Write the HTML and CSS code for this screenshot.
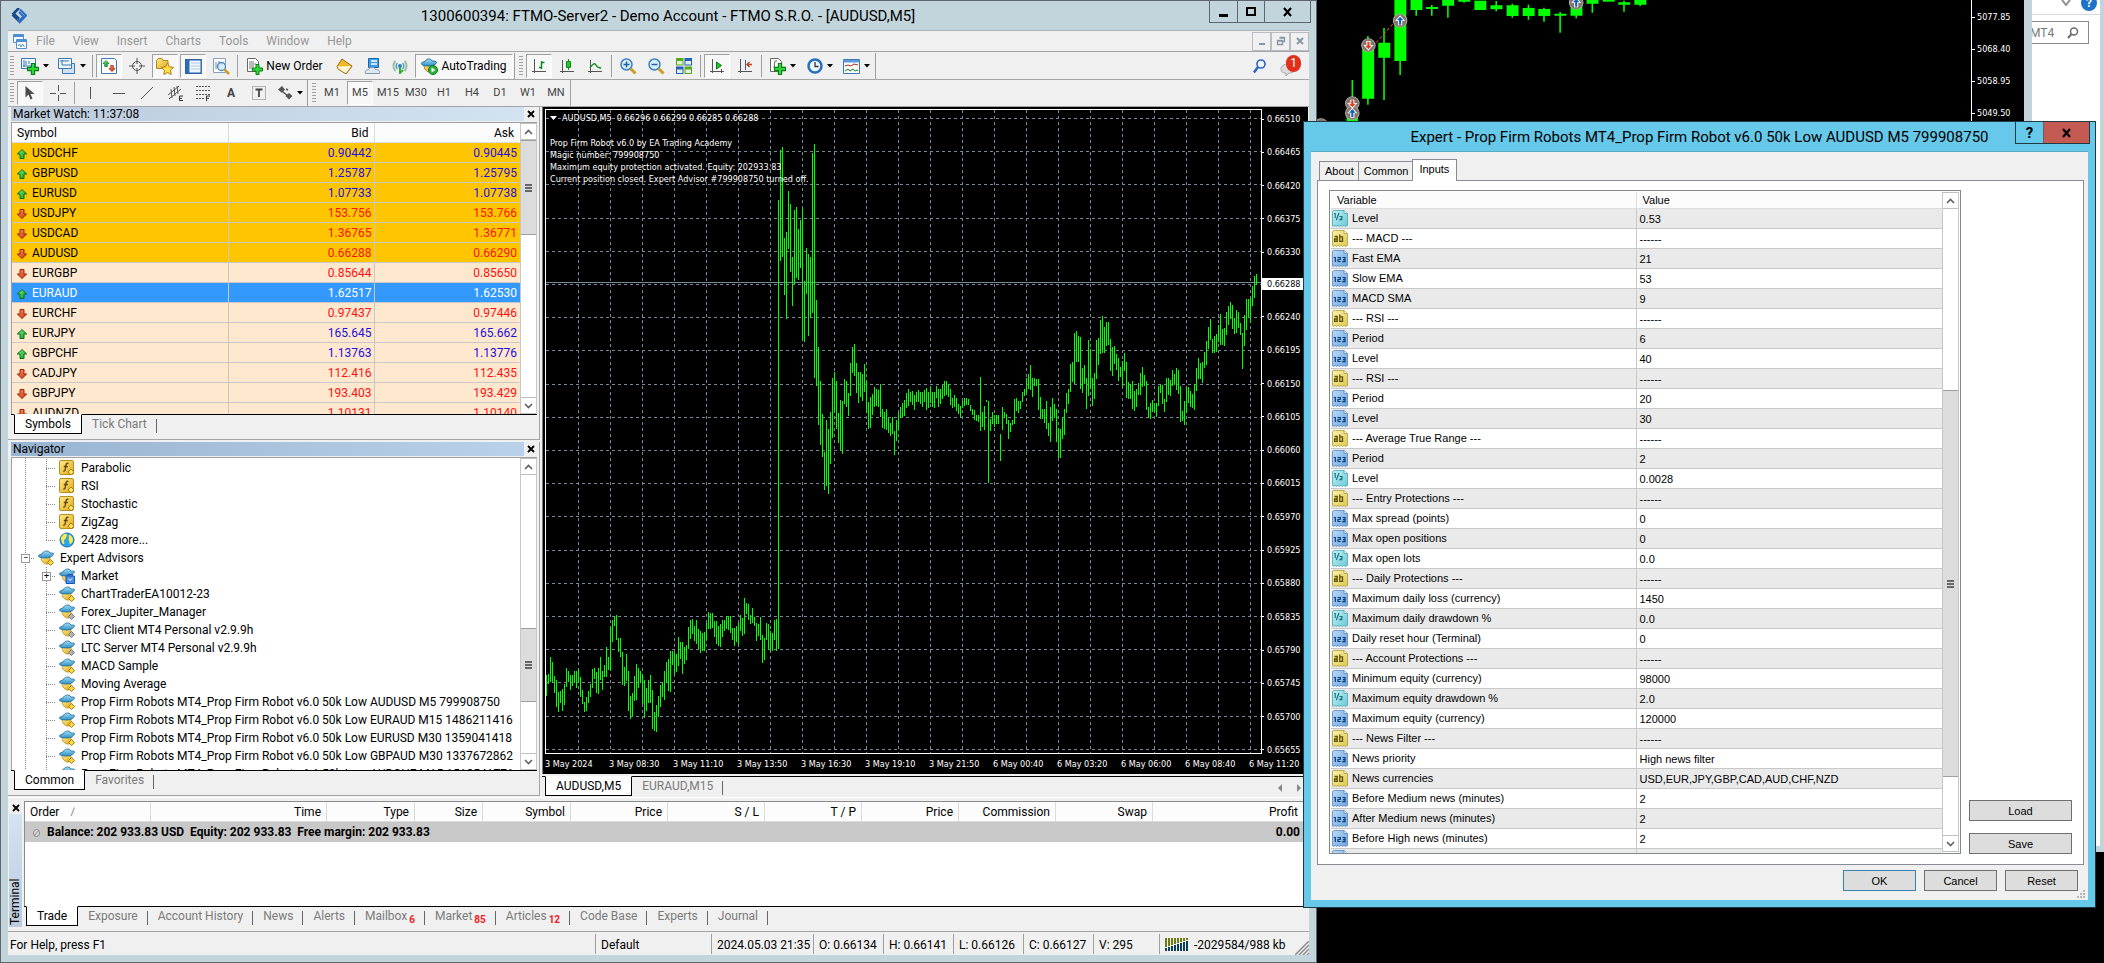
FILE: index.html
```html
<!DOCTYPE html>
<html lang="en">
<head>
    <meta charset="UTF-8">
    <meta name="viewport" content="width=device-width, initial-scale=1.0">
    <title>Trading desktop</title>
    <link rel="stylesheet" href="styles.css">
</head>
<body>
    <svg class="sprite" aria-hidden="true">
      <defs>
        <linearGradient id="gold" x1="0" y1="0" x2="1" y2="1"><stop offset="0" stop-color="#ffeb8a"/><stop offset="1" stop-color="#e0a81c"/></linearGradient>
        <linearGradient id="sky" x1="0" y1="0" x2="0" y2="1"><stop offset="0" stop-color="#9fdcf7"/><stop offset="1" stop-color="#2f8fc4"/></linearGradient>
        <linearGradient id="grn" x1="0" y1="0" x2="1" y2="1"><stop offset="0" stop-color="#7df08a"/><stop offset="1" stop-color="#0c9a1c"/></linearGradient>
        <linearGradient id="rd" x1="0" y1="0" x2="1" y2="1"><stop offset="0" stop-color="#ff9a6a"/><stop offset="1" stop-color="#c92a0a"/></linearGradient>
        <linearGradient id="num" x1="0" y1="0" x2="1" y2="1"><stop offset="0" stop-color="#bcdcf8"/><stop offset="1" stop-color="#6ba3dc"/></linearGradient>
        <linearGradient id="dbl" x1="0" y1="0" x2="1" y2="1"><stop offset="0" stop-color="#c2f2f6"/><stop offset="1" stop-color="#6cc8d6"/></linearGradient>
        <linearGradient id="str" x1="0" y1="0" x2="1" y2="1"><stop offset="0" stop-color="#fbf3b0"/><stop offset="1" stop-color="#dcc84c"/></linearGradient>
      </defs>
      <symbol id="up" viewBox="0 0 12 12"><path d="M6 1.500 10.700 6H8v4.500H4V6H1.300z" fill="url(#grn)" stroke="#0b7016"/></symbol>
      <symbol id="down" viewBox="0 0 12 12"><path d="M6 10.500 1.300 6H4V1.500h4V6h2.700z" fill="url(#rd)" stroke="#9c2408"/></symbol>
      <symbol id="fn" viewBox="0 0 16 16"><rect x=".5" y=".5" width="14" height="14" rx="1.500" fill="url(#gold)" stroke="#b8901c"/><path d="M9.500 3.500c-2-.8-2.400.6-2.700 2.500l-.6 3.500c-.2 1.300-.8 1.800-1.900 1.500M4.800 6.500h4" fill="none" stroke="#5e4300" stroke-width="1.300"/><path d="m12 9 3 3-3 3-3-3z" fill="#ffe36b" stroke="#a87c0c"/></symbol>
      <symbol id="globe" viewBox="0 0 16 16"><circle cx="8" cy="8" r="7" fill="#2aa5e8" stroke="#1672ae"/><path d="M4 3c2-2 4-1 4 0s-1 2-1 3-2 1-2 3 1 2 0 3-3-3-3-6c0-1 1-2 2-3zm7 0c2 1 3 3 3 5s-2 4-3 4 0-2-1-3 0-2 0-3-1-3 1-3z" fill="#ffe94c"/></symbol>
      <symbol id="ea" viewBox="0 0 16 16"><path d="M3 7c0 4 2 6 5 7s4-3 4-7z" fill="url(#gold)" stroke="#a9811b" stroke-width=".7"/><path d="M.5 6C.5 4.500 3 4.500 4 4c1-3 6-4.500 8-1 2 .2 3.500-.5 3.500 1S12 8 8 8 .5 7.500.5 6z" fill="url(#sky)" stroke="#216c98" stroke-width=".8"/><path d="m12.500 9.500 3 3-3 3-3-3z" fill="#ffd83f" stroke="#a87c0c"/></symbol>
      <symbol id="ea-off" viewBox="0 0 16 16"><path d="M3 7c0 4 2 6 5 7s4-3 4-7z" fill="url(#gold)" stroke="#a9811b" stroke-width=".7"/><path d="M.5 6C.5 4.500 3 4.500 4 4c1-3 6-4.500 8-1 2 .2 3.500-.5 3.500 1S12 8 8 8 .5 7.500.5 6z" fill="url(#sky)" stroke="#216c98" stroke-width=".8"/><path d="m12.500 9.500 3 3-3 3-3-3z" fill="#b4b4b4" stroke="#777"/></symbol>
      <symbol id="ea-market" viewBox="0 0 16 16"><path d="M3 7c0 4 2 6 5 7s4-3 4-7z" fill="url(#gold)" stroke="#a9811b" stroke-width=".7"/><path d="M.5 6C.5 4.500 3 4.500 4 4c1-3 6-4.500 8-1 2 .2 3.500-.5 3.500 1S12 8 8 8 .5 7.500.5 6z" fill="url(#sky)" stroke="#216c98" stroke-width=".8"/><path d="M7 8h8.500v7.500H7zM9 8V6.500h4.500V8" fill="#4a8fe8" stroke="#1a55b0"/><path d="m9.500 10.500 1.700 2 1.800-2" fill="none" stroke="#fff"/></symbol>
      <symbol id="t-int" viewBox="0 0 16 17"><path d="M.5 1.500 2 .5h10l3.500 3v12l-2 .9-1.500-1-1.500 1-1.500-1-1.500 1-1.500-1-1.500 1-1.500-1-1.500 1-1-.7z" fill="url(#num)" stroke="#5585bd" stroke-width=".8"/><path d="M12 .5v3h3.500" fill="#e2f0fd" stroke="#5585bd" stroke-width=".8"/><path d="M1.800 7.500h1.500v4.500M5.500 7.500h2.700v2H6v2h2.500M10.500 7.500H13v4.200h-2.700M11 9.600h2" fill="none" stroke="#0b3a75" stroke-width="1.200"/></symbol>
      <symbol id="t-dbl" viewBox="0 0 16 17"><path d="M.5 1.500 2 .5h10l3.500 3v12l-2 .9-1.500-1-1.500 1-1.500-1-1.500 1-1.500-1-1.500 1-1.500-1-1.500 1-1-.7z" fill="url(#dbl)" stroke="#4aa6b4" stroke-width=".8"/><path d="M12 .5v3h3.500" fill="#e6fbfc" stroke="#4aa6b4" stroke-width=".8"/><path d="M2 3.500h1.200V8M7 3 4.300 10M7.500 6.500H10V8L8 9.800h2.500" fill="none" stroke="#12707e" stroke-width="1.100"/></symbol>
      <symbol id="t-str" viewBox="0 0 16 17"><path d="M.5 1.500 2 .5h10l3.500 3v12l-2 .9-1.500-1-1.500 1-1.500-1-1.500 1-1.500-1-1.500 1-1.500-1-1.500 1-1-.7z" fill="url(#str)" stroke="#b09c34" stroke-width=".8"/><path d="M12 .5v3h3.500" fill="#fffbdc" stroke="#b09c34" stroke-width=".8"/><path d="M2.500 6.500h2.700v4.800H2.600V9h2.600M7.800 4.500v6.800h2.700V6.800H8" fill="none" stroke="#5b4e05" stroke-width="1.300"/></symbol>
      <symbol id="caret" viewBox="0 0 6 4"><path d="M0 0h6L3 3.500z" fill="#000"/></symbol>
      <symbol id="chev-up" viewBox="0 0 9 6"><path d="m1 5 3.500-3.500L8 5" fill="none" stroke="#606060" stroke-width="1.600"/></symbol>
      <symbol id="chev-down" viewBox="0 0 9 6"><path d="m1 1 3.500 3.500L8 1" fill="none" stroke="#606060" stroke-width="1.600"/></symbol>
      <symbol id="plus" viewBox="0 0 11 11"><path d="M4 .5h3V4h3.500v3H7v3.500H4V7H.5V4H4z" fill="#2fd83a" stroke="#0b7d14"/></symbol>
    </svg>

    <div class="desktop">
      <!-- window at the far right, mostly covered -->
      <div class="window explorer">
        <div class="explorer-top">
          <svg width="10" height="8" viewBox="0 0 10 8"><path d="M1 1l4 5 4-5" fill="none" stroke="#8a8f94" stroke-width="2"/></svg>
          <span class="help-dot">?</span>
        </div>
        <label class="explorer-search">
          <input type="text" value="MT4" aria-label="Search">
          <svg width="12" height="12" viewBox="0 0 12 12"><circle cx="7" cy="4.500" r="3.500" fill="none" stroke="#6b6b6b" stroke-width="1.500"/><path d="M4.500 7 1 11" stroke="#6b6b6b" stroke-width="2"/></svg>
        </label>
      </div>

      <!-- index chart behind the dialog -->
      <div class="window index-window">
        <div class="index-chart">
          <svg class="index-plot" viewBox="52 0 1259 366" preserveAspectRatio="none">
            <g fill="#0f0">
              <path d="M118.500 240h3v126h-3zM109 340h22v26h-22z"/>
              <path d="M148.500 108h3v206h-3zM139 130h23v166h-23z"/>
              <path d="M179.500 84h3v216h-3zM170 128h23v45h-23z"/>
              <path d="M210.500 0h3v225h-3zM201 0h23v183h-23z"/>
              <path d="M241.500 0h3v47h-3zM232 0h23v30h-23z"/>
              <path d="M271.500 15h3v32h-3zM262 21h23v6h-23z"/>
              <path d="M302.500 0h3v53h-3zM293 0h23v17h-23z"/>
              <path d="M333.500 0h3v8h-3zM324 0h23v5h-23z"/>
              <path d="M355 2h23v28h-23z"/>
              <path d="M395.500 3h3v31h-3zM386 16h23v12h-23z"/>
              <path d="M426.500 11h3v42h-3zM417 16h23v32h-23z"/>
              <path d="M457.500 14h3v45h-3zM448 24h23v24h-23z"/>
              <path d="M487.500 23h3v42h-3zM478 27h23v21h-23z"/>
              <path d="M518.500 36h3v62h-3zM509 41h23v6h-23z"/>
              <path d="M549.500 0h3v55h-3zM540 0h23v47h-23z"/>
              <path d="M580.500 0h3v38h-3zM571 0h23v11h-23z"/>
              <path d="M602 0h23v5h-23z"/>
              <path d="M641.500 2h3v33h-3zM632 7h23v7h-23z"/>
              <path d="M663 0h23v14h-23zM672.500 0h3v18h-3z"/>
            </g>
            <path d="M166 128 206 58" fill="none" stroke="#e2542c" stroke-width="2" stroke-dasharray="8 6"/>
            <g fill="#857468" stroke="#a8a8a8" stroke-width="2">
              <ellipse cx="151" cy="136" rx="13" ry="20"/><ellipse cx="212" cy="62" rx="13" ry="20"/>
              <ellipse cx="120" cy="310" rx="13" ry="20"/><ellipse cx="120" cy="339" rx="13" ry="20"/>
              <ellipse cx="551" cy="8" rx="13" ry="20"/><ellipse cx="60" cy="376" rx="13" ry="20"/>
            </g>
            <g stroke="#fff" stroke-width="2">
              <path d="m151 150-8-14h5v-12h6v12h5zM120 324l-8-14h5v-10h6v10h5z" fill="#e03a1c"/>
              <path d="m212 48 8 14h-5v13h-6V62h-5zM120 325l8 14h-5v13h-6v-13h-5zM551-6l8 14h-5v13h-6V8h-5z" fill="#0f5fb8"/>
            </g>
          </svg>
          <ul class="index-axis">
            <li>5077.85</li>
            <li>5068.40</li>
            <li>5058.95</li>
            <li>5049.50</li>
          </ul>
        </div>
      </div>

      <!-- main terminal window -->
      <div class="window main-window">
        <div class="titlebar">
          <svg class="app-logo" width="16" height="16" viewBox="0 0 16 16"><path d="M8 0 2.500 5.500 8 11M1.500 6.500 8 13" fill="none" stroke="#16488e" stroke-width="2.600"/><path d="m8 4 4.500 4.500L8 13l-2-2m3-9.500L15 7.500 8 15" fill="none" stroke="#2c6cc0" stroke-width="2"/></svg>
          <h1>1300600394: FTMO-Server2 - Demo Account - FTMO S.R.O. - [AUDUSD,M5]</h1>
          <div class="caption-buttons">
            <button aria-label="Minimize"><svg width="12" height="12" viewBox="0 0 12 12"><path d="M1 8h9v3H1z"/></svg></button>
            <button aria-label="Maximize"><svg width="12" height="12" viewBox="0 0 12 12"><path d="M2 2h8v7H2z" fill="none" stroke="#000" stroke-width="2"/></svg></button>
            <button class="wide" aria-label="Close"><svg width="12" height="12" viewBox="0 0 12 12"><path d="m2 2 7 8M9 2l-7 8" stroke="#000" stroke-width="2.200"/></svg></button>
          </div>
        </div>

        <div class="client">
          <div class="menubar">
            <svg class="doc-icon" width="14" height="15" viewBox="0 0 14 15"><path d="M.5.500h10v8H.5z" fill="#fff" stroke="#4f8fd0"/><path d="M.5 1h10v2H.500z" fill="#4f8fd0"/><path d="M3.500 5.500h10v9h-10z" fill="#fff" stroke="#4f8fd0"/><path d="M3.500 6h10v2h-10z" fill="#4f8fd0"/><path d="m5 12 1.500-2L8 13l1.500-3 2 3" fill="none" stroke="#4f8fd0"/></svg>
            <nav>
              <a href="#">File</a>
              <a href="#">View</a>
              <a href="#">Insert</a>
              <a href="#">Charts</a>
              <a href="#">Tools</a>
              <a href="#">Window</a>
              <a href="#">Help</a>
            </nav>
            <div class="mdi-buttons">
              <button aria-label="Minimize chart"><svg width="10" height="10" viewBox="0 0 10 10"><path d="M2 7h6v2H2z" fill="#8696a6"/></svg></button>
              <button aria-label="Restore chart"><svg width="10" height="10" viewBox="0 0 10 10"><path d="M3.500 1.500h5v4h-2M1.500 4.500h5v4h-5zM1.500 5h5M3.500 2h5" fill="none" stroke="#8696a6" stroke-width="1.300"/></svg></button>
              <button aria-label="Close chart"><svg width="10" height="10" viewBox="0 0 10 10"><path d="m2 2 6 6M8 2 2 8" stroke="#8696a6" stroke-width="2"/></svg></button>
            </div>
          </div>

          <div class="toolbar-row">
            <div class="toolbar">
              <i class="grip"></i>
              <button class="drop" aria-label="New chart"><svg width="18" height="18" viewBox="0 0 18 18"><path d="M.5 1.500h14v10H.5z" fill="#eef5fc" stroke="#3b78b5"/><path d="M3 3v7m-1-1h11M5 8V4m3 3V4" stroke="#3b78b5" fill="none"/><use href="#plus" x="6" y="6" width="12" height="12"/></svg><svg width="6" height="4"><use href="#caret"/></svg></button>
              <button class="drop" aria-label="Profiles"><svg width="18" height="18" viewBox="0 0 18 18"><path d="M4.500 6.500h12v10h-12z" fill="#cfe2f4" stroke="#3b78b5"/><path d="M.5 1.500h13v10H.5z" fill="#eef5fc" stroke="#3b78b5"/><path d="M2 4h9M4 3v5h9" stroke="#3b78b5" fill="none"/></svg><svg width="6" height="4"><use href="#caret"/></svg></button>
              <i class="sep"></i>
              <button class="on" aria-label="Market Watch"><svg width="16" height="16" viewBox="0 0 16 16"><path d="M.5.500h13l2 2v13H.5z" fill="#fff" stroke="#3b78b5"/><use href="#up" x="1" y="1" width="8" height="9"/><use href="#down" x="7" y="6" width="8" height="9"/></svg></button>
              <button aria-label="Data Window"><svg width="16" height="16" viewBox="0 0 16 16"><circle cx="8" cy="8" r="4.500" fill="none" stroke="#555"/><path d="M8 0v6m0 4v6M0 8h6m4 0h6" stroke="#555"/></svg></button>
              <button class="on" aria-label="Navigator"><svg width="18" height="17" viewBox="0 0 18 17"><path d="M.5 2.500 2 .5h4l1 2h5v8H.5z" fill="url(#gold)" stroke="#b08a20"/><path d="m11.500 5 1.800 3.800 4.200.6-3 3 .7 4.100-3.700-2-3.700 2 .7-4.100-3-3 4.200-.6z" fill="#ffdf4a" stroke="#b47d0a"/></svg></button>
              <button class="on" aria-label="Terminal"><svg width="17" height="15" viewBox="0 0 17 15"><path d="M.7.700h15.500v13.500H.7z" fill="#eef5fc" stroke="#2a62a5" stroke-width="1.400"/><path d="M1 1h3.500v13H1z" fill="#2c6db8"/><path d="M6 4h9M6 7h9M6 10h9" stroke="#b5cce4"/></svg></button>
              <button aria-label="Strategy Tester"><svg width="17" height="17" viewBox="0 0 17 17"><path d="M.5.500h12v14H.5z" fill="#fff" stroke="#8aa0b8"/><path d="M3 4v7m3-8v7m3-6v3" stroke="#5d84b0"/><circle cx="8.500" cy="8.500" r="4" fill="#cdeafc" fill-opacity=".8" stroke="#4d88be" stroke-width="1.300"/><path d="m11.500 11.500 4.500 4.500" stroke="#d09b22" stroke-width="2.500"/></svg></button>
              <i class="sep"></i>
              <button class="text order" aria-label="New Order"><svg width="16" height="17" viewBox="0 0 16 17"><path d="M.5.500h8l3 3v10H.5z" fill="#fff" stroke="#666"/><path d="M2 4h5M2 6h7M2 8h5M2 10h4" stroke="#777"/><use href="#plus" x="5" y="6" width="11" height="11"/></svg>New Order</button>
              <button aria-label="MetaEditor"><svg width="17" height="16" viewBox="0 0 17 16"><path d="m6 1 10 7-6 7L1 8.500z" fill="#f2b92a" stroke="#9a6a08"/><path d="m1 8.500 1 2.500 8 5 6-8" fill="#fff6d6" stroke="#9a6a08"/></svg></button>
              <button aria-label="Market"><svg width="17" height="17" viewBox="0 0 17 17"><path d="M4.500.500h10v9h-10z" fill="#3e9bea" stroke="#1767b2"/><path d="M7 3h6M7 6h6" stroke="#fff" stroke-width="1.500"/><path d="M1.500 15.500c-1-3 1.500-4 3-4 1-3 6-3 7 0 3 0 5 1.500 4 4z" fill="#dfe7f1" stroke="#8295ad"/></svg></button>
              <button aria-label="Signals"><svg width="16" height="16" viewBox="0 0 16 16"><path d="M3.500 13a7 7 0 0 1 0-10M12.500 3a7 7 0 0 1 0 10" fill="none" stroke="#9dc0a3" stroke-width="2"/><path d="M5.500 11a4 4 0 0 1 0-6M10.500 5a4 4 0 0 1 0 6" fill="none" stroke="#4e9fce" stroke-width="1.500"/><circle cx="8" cy="8" r="2" fill="#2f7fc0"/><path d="M8 9v6l3-3" fill="none" stroke="#2fae3a" stroke-width="2"/></svg></button>
              <button class="text on auto" aria-label="AutoTrading"><svg width="17" height="17" viewBox="0 0 17 17"><path d="M3 6c0 4 1 7 5 8s5-4 5-8z" fill="url(#gold)" stroke="#a9811b"/><path d="M.5 5.500c0-1.500 2-1.500 3.500-2 1-3 6-3.500 7-.5 2 .2 4.500 0 4.500 1.500S12 8 8 8 .500 7.500.500 5.500z" fill="url(#sky)" stroke="#216c98"/><circle cx="12" cy="12" r="4.500" fill="#28b236" stroke="#0c7a18"/><path d="M10.500 9.500v5l4-2.500z" fill="#fff"/></svg>AutoTrading</button>
            </div>
            <div class="toolbar">
              <i class="grip"></i>
              <button class="on" aria-label="Bar chart"><svg width="14" height="15" viewBox="0 0 14 15"><path d="M2.500 0v14M0 12.500h14" stroke="#555"/><path d="M9.500 2v8M7 8.500h2M10 3.500h2.500" stroke="#0a8a1a" stroke-width="1.500"/></svg></button>
              <button aria-label="Candlesticks"><svg width="14" height="15" viewBox="0 0 14 15"><path d="M2.500 1v13M0 12.500h14" stroke="#555"/><path d="M8.500 0v11" stroke="#0a8a1a"/><path d="M6.500 2.500h4v6h-4z" fill="#22c52f" stroke="#0a8a1a"/></svg></button>
              <button aria-label="Line chart"><svg width="14" height="15" viewBox="0 0 14 15"><path d="M2.500 1v13M0 12.500h14" stroke="#555"/><path d="M2 9c3-5 5-5 6-3s3 3 5 3" fill="none" stroke="#0a8a1a" stroke-width="1.300"/></svg></button>
              <i class="sep"></i>
              <button aria-label="Zoom In"><svg width="17" height="17" viewBox="0 0 17 17"><circle cx="6.500" cy="6.500" r="5.500" fill="#d9effd" stroke="#3c7fc0" stroke-width="1.500"/><path d="M6.500 3.500v6M3.500 6.500h6" stroke="#1f5da0" stroke-width="1.500"/><path d="m10.500 10.500 5 5" stroke="#d09b22" stroke-width="3"/></svg></button>
              <button aria-label="Zoom Out"><svg width="17" height="17" viewBox="0 0 17 17"><circle cx="6.500" cy="6.500" r="5.500" fill="#d9effd" stroke="#3c7fc0" stroke-width="1.500"/><path d="M3.500 6.500h6" stroke="#1f5da0" stroke-width="1.500"/><path d="m10.500 10.500 5 5" stroke="#d09b22" stroke-width="3"/></svg></button>
              <button aria-label="Tile Windows"><svg width="16" height="16" viewBox="0 0 16 16"><path d="M0 0h7.500v7.500H0zM8.500 8.500H16V16H8.500z" fill="#58a81c"/><path d="M8.500 0H16v7.500H8.500zM0 8.500h7.500V16H0z" fill="#2560bd"/><path d="M1 3h5.500v3.500H1zm8.500 0H15v3.500H9.500zM1 11.500h5.500V15H1zm8.500 0H15V15H9.500z" fill="#e3f0e0"/></svg></button>
              <i class="sep"></i>
              <button class="on" aria-label="Auto Scroll"><svg width="15" height="15" viewBox="0 0 15 15"><path d="M2.500 0v14M0 12.500h14M11.500 10v4" stroke="#555"/><path d="M6.500 3v7l5-3.500z" fill="#22c52f" stroke="#0a7a16"/></svg></button>
              <button aria-label="Chart Shift"><svg width="15" height="15" viewBox="0 0 15 15"><path d="M2.500 0v14M0 12.500h14" stroke="#555"/><path d="M7.500 1v10" stroke="#2a62a5"/><path d="M14 5.500H9m2.500-2.500L9 5.500 11.500 8" fill="none" stroke="#c0401a" stroke-width="1.400"/></svg></button>
              <i class="sep"></i>
              <button class="drop" aria-label="Indicators"><svg width="16" height="17" viewBox="0 0 16 17"><path d="M.5.500h8l3 3v10H.5z" fill="#fff" stroke="#666"/><path d="M7 3c-3-1-2 2-3 7" fill="none" stroke="#555"/><use href="#plus" x="4" y="5" width="12" height="12"/></svg><svg width="6" height="4"><use href="#caret"/></svg></button>
              <button class="drop" aria-label="Periods"><svg width="16" height="16" viewBox="0 0 16 16"><circle cx="8" cy="8" r="6.500" fill="#eef6fd" stroke="#2470be" stroke-width="2.500"/><path d="M8 4v4.500h3.500" fill="none" stroke="#333" stroke-width="1.300"/></svg><svg width="6" height="4"><use href="#caret"/></svg></button>
              <button class="drop" aria-label="Templates"><svg width="17" height="15" viewBox="0 0 17 15"><path d="M.5.500h16v14H.5z" fill="#fff" stroke="#3b78b5"/><path d="M.5 1h16v2.500H.5z" fill="#5b9bd8"/><path d="m2 7 3-1 3 1 3-2 4 1" fill="none" stroke="#b02a12"/><path d="m2 12 3-2 2 2 3-2 2 2 3-1" fill="none" stroke="#0a8a1a"/></svg><svg width="6" height="4"><use href="#caret"/></svg></button>
            </div>
            <div class="toolbar-end">
              <button aria-label="Search"><svg width="13" height="15" viewBox="0 0 13 15"><circle cx="8" cy="5" r="4" fill="#eef5fc" stroke="#2a62c5" stroke-width="1.600"/><path d="m5 8-4 5.500" stroke="#2a62c5" stroke-width="2.400"/></svg></button>
              <button class="bell" aria-label="Notifications"><svg width="16" height="16" viewBox="0 0 16 16"><path d="M1 9c0-3 3-5 7-5s7 2 7 5-3 4-6 4l-3 3v-3c-3 0-5-1-5-4z" fill="#dcdcdc" stroke="#aaa"/></svg><span class="count">1</span></button>
            </div>
          </div>

          <div class="toolbar-row">
            <div class="toolbar drawing">
              <i class="grip"></i>
              <button class="on" aria-label="Cursor"><svg width="12" height="16" viewBox="0 0 12 16"><path d="M1.500 1v11.500l3-3 2 5 2-1-2-4.500h4z" fill="#4a4a4a"/></svg></button>
              <button aria-label="Crosshair"><svg width="16" height="16" viewBox="0 0 16 16"><path d="M8.500 0v6m0 4v6M0 8.500h6m4 0h6" stroke="#555"/></svg></button>
              <i class="sep"></i>
              <button aria-label="Vertical Line"><svg width="16" height="16" viewBox="0 0 16 16"><path d="M7.500 2v12" stroke="#555"/></svg></button>
              <button aria-label="Horizontal Line"><svg width="16" height="16" viewBox="0 0 16 16"><path d="M2 8.500h12" stroke="#555"/></svg></button>
              <button aria-label="Trendline"><svg width="16" height="16" viewBox="0 0 16 16"><path d="M2 14 14 2" stroke="#555"/></svg></button>
              <button aria-label="Equidistant Channel"><svg width="17" height="16" viewBox="0 0 17 16"><path d="M1 10 12 1M2 14 14 4M4 4l1 9M7 2l1 9M10 1l1 8" stroke="#555"/><path d="M16 11h-3.500v4.500H16M12.500 13.300H15" fill="none" stroke="#333"/></svg></button>
              <button aria-label="Fibonacci"><svg width="17" height="16" viewBox="0 0 17 16"><path d="M1 1.500h14M1 5.500h14M1 9.500h14M1 13.500h8" stroke="#555" stroke-dasharray="2 1"/><path d="M15 11h-3.500v5M11.500 13.300H14" fill="none" stroke="#333"/></svg></button>
              <button class="glyph" aria-label="Text">A</button>
              <button aria-label="Text Label"><svg width="14" height="16" viewBox="0 0 14 16"><path d="M.5 1.500h13v13H.5z" fill="none" stroke="#777" stroke-dasharray="1 1"/><path d="M3.500 4.500h7M7 4v8" stroke="#444" stroke-width="1.800"/></svg></button>
              <button class="drop" aria-label="Arrows"><svg width="15" height="14" viewBox="0 0 15 14"><path d="m4 0 3 3.500-3 3.500-4-3.500zM11 7l3.500 3-3.500 3.500L7.500 10z" fill="#555"/><path d="m5 6 5 4M8 3l2 1" stroke="#555" stroke-width="1.500"/></svg><svg width="6" height="4"><use href="#caret"/></svg></button>
            </div>
            <div class="toolbar periods">
              <i class="grip"></i>
              <button>M1</button>
              <button class="on">M5</button>
              <button>M15</button>
              <button>M30</button>
              <button>H1</button>
              <button>H4</button>
              <button>D1</button>
              <button>W1</button>
              <button>MN</button>
            </div>
          </div>

          <div class="workspace">
            <div class="dock">
              <section class="panel market">
                <header class="panel-title">
                  <h2>Market Watch: 11:37:08</h2>
                  <button class="panel-close" aria-label="Close"><svg width="8" height="8" viewBox="0 0 8 8"><path d="m1 1 6 6M7 1 1 7" stroke="#000" stroke-width="1.800"/></svg></button>
                </header>
                <div class="panel-body">
                  <table class="quotes">
                    <thead>
                      <tr><th>Symbol</th><th>Bid</th><th>Ask</th></tr>
                    </thead>
                    <tbody>
                      <tr class="hot rise"><td><svg><use href="#up"/></svg>USDCHF</td><td>0.90442</td><td>0.90445</td></tr>
                      <tr class="hot rise"><td><svg><use href="#up"/></svg>GBPUSD</td><td>1.25787</td><td>1.25795</td></tr>
                      <tr class="hot rise"><td><svg><use href="#up"/></svg>EURUSD</td><td>1.07733</td><td>1.07738</td></tr>
                      <tr class="hot fall"><td><svg><use href="#down"/></svg>USDJPY</td><td>153.756</td><td>153.766</td></tr>
                      <tr class="hot fall"><td><svg><use href="#down"/></svg>USDCAD</td><td>1.36765</td><td>1.36771</td></tr>
                      <tr class="hot fall"><td><svg><use href="#down"/></svg>AUDUSD</td><td>0.66288</td><td>0.66290</td></tr>
                      <tr class="fall"><td><svg><use href="#down"/></svg>EURGBP</td><td>0.85644</td><td>0.85650</td></tr>
                      <tr class="selected"><td><svg><use href="#up"/></svg>EURAUD</td><td>1.62517</td><td>1.62530</td></tr>
                      <tr class="fall"><td><svg><use href="#down"/></svg>EURCHF</td><td>0.97437</td><td>0.97446</td></tr>
                      <tr class="rise"><td><svg><use href="#up"/></svg>EURJPY</td><td>165.645</td><td>165.662</td></tr>
                      <tr class="rise"><td><svg><use href="#up"/></svg>GBPCHF</td><td>1.13763</td><td>1.13776</td></tr>
                      <tr class="fall"><td><svg><use href="#down"/></svg>CADJPY</td><td>112.416</td><td>112.435</td></tr>
                      <tr class="fall"><td><svg><use href="#down"/></svg>GBPJPY</td><td>193.403</td><td>193.429</td></tr>
                      <tr class="fall"><td><svg><use href="#down"/></svg>AUDNZD</td><td>1.10131</td><td>1.10140</td></tr>
                    </tbody>
                  </table>
                  <div class="scrollbar">
                    <button aria-label="Scroll up"><svg width="9" height="6"><use href="#chev-up"/></svg></button>
                    <div class="track"><div class="thumb"></div></div>
                    <button aria-label="Scroll down"><svg width="9" height="6"><use href="#chev-down"/></svg></button>
                  </div>
                </div>
                <div class="tabs">
                  <a class="active" href="#">Symbols</a>
                  <a href="#">Tick Chart</a>
                </div>
              </section>

              <section class="panel navigator">
                <header class="panel-title focus">
                  <h2>Navigator</h2>
                  <button class="panel-close" aria-label="Close"><svg width="8" height="8" viewBox="0 0 8 8"><path d="m1 1 6 6M7 1 1 7" stroke="#000" stroke-width="1.800"/></svg></button>
                </header>
                <div class="panel-body">
                  <ul class="tree">
                    <li class="leaf"><svg><use href="#fn"/></svg>Parabolic</li>
                    <li class="leaf"><svg><use href="#fn"/></svg>RSI</li>
                    <li class="leaf"><svg><use href="#fn"/></svg>Stochastic</li>
                    <li class="leaf"><svg><use href="#fn"/></svg>ZigZag</li>
                    <li class="leaf last"><svg><use href="#globe"/></svg>2428 more...</li>
                    <li class="branch"><b>−</b><svg><use href="#ea"/></svg>Expert Advisors</li>
                    <li class="leaf"><b>+</b><svg><use href="#ea-market"/></svg>Market</li>
                    <li class="leaf"><svg><use href="#ea"/></svg>ChartTraderEA10012-23</li>
                    <li class="leaf"><svg><use href="#ea-off"/></svg>Forex_Jupiter_Manager</li>
                    <li class="leaf"><svg><use href="#ea-off"/></svg>LTC Client MT4 Personal v2.9.9h</li>
                    <li class="leaf"><svg><use href="#ea-off"/></svg>LTC Server MT4 Personal v2.9.9h</li>
                    <li class="leaf"><svg><use href="#ea"/></svg>MACD Sample</li>
                    <li class="leaf"><svg><use href="#ea"/></svg>Moving Average</li>
                    <li class="leaf"><svg><use href="#ea"/></svg>Prop Firm Robots MT4_Prop Firm Robot v6.0 50k Low AUDUSD M5 799908750</li>
                    <li class="leaf"><svg><use href="#ea"/></svg>Prop Firm Robots MT4_Prop Firm Robot v6.0 50k Low EURAUD M15 1486211416</li>
                    <li class="leaf"><svg><use href="#ea"/></svg>Prop Firm Robots MT4_Prop Firm Robot v6.0 50k Low EURUSD M30 1359041418</li>
                    <li class="leaf"><svg><use href="#ea"/></svg>Prop Firm Robots MT4_Prop Firm Robot v6.0 50k Low GBPAUD M30 1337672862</li>
                    <li class="leaf"><svg><use href="#ea"/></svg>Prop Firm Robots MT4_Prop Firm Robot v6.1 50k Low AUDCHF M15 1512541771</li>
                  </ul>
                  <div class="scrollbar">
                    <button aria-label="Scroll up"><svg width="9" height="6"><use href="#chev-up"/></svg></button>
                    <div class="track"><div class="thumb"></div></div>
                    <button aria-label="Scroll down"><svg width="9" height="6"><use href="#chev-down"/></svg></button>
                  </div>
                </div>
                <div class="tabs">
                  <a class="active" href="#">Common</a>
                  <a href="#">Favorites</a>
                </div>
              </section>
            </div>

            <div class="chart-pane">
              <div class="chart">
                <div class="plot">
                  <svg id="plot" viewBox="0 24 715 1528" preserveAspectRatio="none">
                    <path id="grid" class="grid"/>
                    <path class="bid-line" d="M0 433.500h715"/>
                    <path id="bars" class="bars"/>
                  </svg>
                  <div class="plot-text">
                    <p class="quote-line"><svg width="7" height="4" viewBox="0 0 7 4"><path d="M0 0h7L3.500 4z" fill="#fff"/></svg>AUDUSD,M5&nbsp; 0.66296 0.66299 0.66285 0.66288</p>
                    <p>Prop Firm Robot v6.0 by EA Trading Academy</p>
                    <p>Magic number: 799908750</p>
                    <p>Maximum equity protection activated. Equity: 202933.83</p>
                    <p>Current position closed. Expert Advisor #799908750 turned off.</p>
                  </div>
                </div>
                <ul class="price-axis">
                  <li>0.66510</li>
                  <li>0.66465</li>
                  <li>0.66420</li>
                  <li>0.66375</li>
                  <li>0.66330</li>
                  <li class="bid">0.66288</li>
                  <li>0.66240</li>
                  <li>0.66195</li>
                  <li>0.66150</li>
                  <li>0.66105</li>
                  <li>0.66060</li>
                  <li>0.66015</li>
                  <li>0.65970</li>
                  <li>0.65925</li>
                  <li>0.65880</li>
                  <li>0.65835</li>
                  <li>0.65790</li>
                  <li>0.65745</li>
                  <li>0.65700</li>
                  <li>0.65655</li>
                </ul>
                <ul class="time-axis">
                  <li>3 May 2024</li>
                  <li>3 May 08:30</li>
                  <li>3 May 11:10</li>
                  <li>3 May 13:50</li>
                  <li>3 May 16:30</li>
                  <li>3 May 19:10</li>
                  <li>3 May 21:50</li>
                  <li>6 May 00:40</li>
                  <li>6 May 03:20</li>
                  <li>6 May 06:00</li>
                  <li>6 May 08:40</li>
                  <li>6 May 11:20</li>
                </ul>
              </div>
              <div class="tabs chart-tabs">
                <a class="active" href="#">AUDUSD,M5</a>
                <a href="#">EURAUD,M15</a>
                <span class="tab-arrows"><svg width="24" height="8" viewBox="0 0 24 8"><path d="M4 0v8L0 4zM19 0v8l4-4z" fill="#888"/></svg></span>
              </div>
            </div>
          </div>

          <section class="terminal">
            <div class="terminal-side">
              <button class="panel-close" aria-label="Close"><svg width="8" height="8" viewBox="0 0 8 8"><path d="m1 1 6 6M7 1 1 7" stroke="#000" stroke-width="1.800"/></svg></button>
              <h2>Terminal</h2>
            </div>
            <div class="terminal-main">
              <div class="terminal-body">
                <table class="orders">
                  <thead>
                    <tr><th>Order <span class="sort">∕</span></th><th>Time</th><th>Type</th><th>Size</th><th>Symbol</th><th>Price</th><th>S / L</th><th>T / P</th><th>Price</th><th>Commission</th><th>Swap</th><th>Profit</th></tr>
                  </thead>
                  <tbody>
                    <tr><td colspan="11"><svg width="7" height="8" viewBox="0 0 7 8"><ellipse cx="3.500" cy="4" rx="3" ry="3.500" fill="#ddd" stroke="#888"/><path d="m1.500 6.500 4-5" stroke="#888"/></svg>Balance: 202 933.83 USD&nbsp; Equity: 202 933.83&nbsp; Free margin: 202 933.83</td><td>0.00</td></tr>
                  </tbody>
                </table>
              </div>
              <div class="tabs">
                <a class="active" href="#">Trade</a>
                <a href="#">Exposure</a>
                <a href="#">Account History</a>
                <a href="#">News</a>
                <a href="#">Alerts</a>
                <a href="#">Mailbox<sub>6</sub></a>
                <a href="#">Market<sub>85</sub></a>
                <a href="#">Articles<sub>12</sub></a>
                <a href="#">Code Base</a>
                <a href="#">Experts</a>
                <a href="#">Journal</a>
              </div>
            </div>
          </section>

          <footer class="statusbar">
            <span class="hint">For Help, press F1</span>
            <span class="profile">Default</span>
            <span class="date">2024.05.03 21:35</span>
            <span class="ohlc">O: 0.66134</span>
            <span class="ohlc">H: 0.66141</span>
            <span class="ohlc">L: 0.66126</span>
            <span class="ohlc">C: 0.66127</span>
            <span class="volume">V: 295</span>
            <span class="traffic"><svg width="24" height="13" viewBox="0 0 24 13"><path d="M1 0v9M4 0v8M7 0v7M10 0v6M13 0v5M16 0v4M19 0v3M22 0v2" stroke="#6b7d12" stroke-width="2"/><path d="M1 10v3M4 9v4M7 8v5M10 7v6M13 6v7M16 5v8M19 4v9M22 3v10" stroke="#0c3f5c" stroke-width="2"/></svg>-2029584/988 kb</span>
            <svg class="size-grip" width="14" height="14" viewBox="0 0 14 14"><path d="M0 14 14 0M4 14 14 4M8 14l6-6M12 14l2-2" stroke="#8a8a8a" stroke-width="1.500"/></svg>
          </footer>
        </div>
      </div>

      <!-- expert settings -->
      <div class="window dialog" role="dialog" aria-label="Expert settings">
        <div class="titlebar">
          <h1>Expert - Prop Firm Robots MT4_Prop Firm Robot v6.0 50k Low AUDUSD M5 799908750</h1>
          <div class="caption-buttons">
            <button aria-label="Help">?</button>
            <button class="wide close" aria-label="Close"><svg width="12" height="12" viewBox="0 0 12 12"><path d="m2 2 7 8M9 2l-7 8" stroke="#000" stroke-width="2.200"/></svg></button>
          </div>
        </div>
        <div class="dialog-body">
          <div class="dialog-tabs">
            <button>About</button>
            <button>Common</button>
            <button class="active">Inputs</button>
          </div>
          <div class="dialog-page">
            <div class="inputs-frame">
              <table class="inputs">
                <thead>
                  <tr><th>Variable</th><th>Value</th></tr>
                </thead>
                <tbody>
                  <tr><td><svg><use href="#t-dbl"/></svg>Level</td><td>0.53</td></tr>
                  <tr><td><svg><use href="#t-str"/></svg>--- MACD ---</td><td>------</td></tr>
                  <tr><td><svg><use href="#t-int"/></svg>Fast EMA</td><td>21</td></tr>
                  <tr><td><svg><use href="#t-int"/></svg>Slow EMA</td><td>53</td></tr>
                  <tr><td><svg><use href="#t-int"/></svg>MACD SMA</td><td>9</td></tr>
                  <tr><td><svg><use href="#t-str"/></svg>--- RSI ---</td><td>------</td></tr>
                  <tr><td><svg><use href="#t-int"/></svg>Period</td><td>6</td></tr>
                  <tr><td><svg><use href="#t-int"/></svg>Level</td><td>40</td></tr>
                  <tr><td><svg><use href="#t-str"/></svg>--- RSI ---</td><td>------</td></tr>
                  <tr><td><svg><use href="#t-int"/></svg>Period</td><td>20</td></tr>
                  <tr><td><svg><use href="#t-int"/></svg>Level</td><td>30</td></tr>
                  <tr><td><svg><use href="#t-str"/></svg>--- Average True Range ---</td><td>------</td></tr>
                  <tr><td><svg><use href="#t-int"/></svg>Period</td><td>2</td></tr>
                  <tr><td><svg><use href="#t-dbl"/></svg>Level</td><td>0.0028</td></tr>
                  <tr><td><svg><use href="#t-str"/></svg>--- Entry Protections ---</td><td>------</td></tr>
                  <tr><td><svg><use href="#t-int"/></svg>Max spread (points)</td><td>0</td></tr>
                  <tr><td><svg><use href="#t-int"/></svg>Max open positions</td><td>0</td></tr>
                  <tr><td><svg><use href="#t-dbl"/></svg>Max open lots</td><td>0.0</td></tr>
                  <tr><td><svg><use href="#t-str"/></svg>--- Daily Protections ---</td><td>------</td></tr>
                  <tr><td><svg><use href="#t-int"/></svg>Maximum daily loss (currency)</td><td>1450</td></tr>
                  <tr><td><svg><use href="#t-dbl"/></svg>Maximum daily drawdown %</td><td>0.0</td></tr>
                  <tr><td><svg><use href="#t-int"/></svg>Daily reset hour (Terminal)</td><td>0</td></tr>
                  <tr><td><svg><use href="#t-str"/></svg>--- Account Protections ---</td><td>------</td></tr>
                  <tr><td><svg><use href="#t-int"/></svg>Minimum equity (currency)</td><td>98000</td></tr>
                  <tr><td><svg><use href="#t-dbl"/></svg>Maximum equity drawdown %</td><td>2.0</td></tr>
                  <tr><td><svg><use href="#t-int"/></svg>Maximum equity (currency)</td><td>120000</td></tr>
                  <tr><td><svg><use href="#t-str"/></svg>--- News Filter ---</td><td>------</td></tr>
                  <tr><td><svg><use href="#t-int"/></svg>News priority</td><td>High news filter</td></tr>
                  <tr><td><svg><use href="#t-str"/></svg>News currencies</td><td>USD,EUR,JPY,GBP,CAD,AUD,CHF,NZD</td></tr>
                  <tr><td><svg><use href="#t-int"/></svg>Before Medium news (minutes)</td><td>2</td></tr>
                  <tr><td><svg><use href="#t-int"/></svg>After Medium news (minutes)</td><td>2</td></tr>
                  <tr><td><svg><use href="#t-int"/></svg>Before High news (minutes)</td><td>2</td></tr>
                  <tr><td><svg><use href="#t-int"/></svg></td><td></td></tr>
                </tbody>
              </table>
              <div class="scrollbar">
                <button aria-label="Scroll up"><svg width="9" height="6"><use href="#chev-up"/></svg></button>
                <div class="track"><div class="thumb"></div></div>
                <button aria-label="Scroll down"><svg width="9" height="6"><use href="#chev-down"/></svg></button>
              </div>
            </div>
            <div class="side-buttons">
              <button class="btn">Load</button>
              <button class="btn">Save</button>
            </div>
          </div>
          <div class="dialog-footer">
            <button class="btn default">OK</button>
            <button class="btn">Cancel</button>
            <button class="btn">Reset</button>
            <svg class="size-grip" width="8" height="8" viewBox="0 0 8 8"><path d="M6 0h2v2H6zM3 3h2v2H3zm3 0h2v2H6zM0 6h2v2H0zm3 0h2v2H3zm3 0h2v2H6z" fill="#b8b8b8"/></svg>
          </div>
        </div>
      </div>
    </div>

    <script>
(function() {
  // high and low of every five minute bar, in plot units
  var bars = [
    1366,1416, 1365,1387, 1323,1384, 1335,1384, 1368,1410, 1378,1443, 1408,1455, 1404,1433, 1401,1452, 1388,1437,
    1349,1394, 1357,1383, 1366,1403, 1367,1392, 1357,1385, 1357,1398, 1353,1384, 1372,1418, 1402,1435, 1430,1455,
    1418,1452, 1404,1433, 1389,1418, 1352,1398, 1349,1375, 1360,1410, 1349,1411, 1323,1378, 1357,1403, 1342,1372,
    1301,1371, 1323,1354, 1253,1357, 1235,1288, 1227,1251, 1224,1284, 1278,1313, 1278,1325, 1311,1390, 1347,1392,
    1316,1380, 1357,1452, 1417,1472, 1409,1464, 1368,1429, 1340,1425, 1349,1398, 1358,1386, 1364,1436, 1378,1470,
    1398,1452, 1378,1433, 1366,1433, 1402,1494, 1454,1500, 1437,1503, 1416,1466, 1390,1442, 1384,1420, 1357,1425,
    1335,1385, 1329,1405, 1309,1406, 1309,1344, 1314,1366, 1316,1360, 1276,1345, 1288,1328, 1288,1365, 1299,1341,
    1295,1330, 1253,1304, 1235,1280, 1233,1269, 1250,1285, 1235,1292, 1257,1304, 1262,1315, 1266,1310, 1264,1310,
    1243,1284, 1216,1257, 1219,1258, 1219,1254, 1238,1277, 1238,1292, 1250,1297, 1245,1299, 1235,1276, 1235,1261,
    1227,1257, 1227,1260, 1226,1266, 1256,1284, 1254,1297, 1250,1288, 1243,1296, 1224,1262, 1231,1273, 1184,1270,
    1195,1221, 1197,1237, 1224,1245, 1208,1243, 1228,1250, 1243,1287, 1245,1273, 1228,1284, 1271,1337, 1278,1330,
    1243,1284, 1245,1305, 1262,1310, 1268,1310, 1235,1284, 1233,1310, 238,1306, 119,382, 112,374, 327,463,
    314,520, 216,355, 247,409, 373,489, 262,437, 254,423, 306,428, 285,399, 259,570, 430,575,
    352,461, 366,561, 373,516, 126,507, 105,660, 475,680, 587,772, 668,820, 747,848, 836,927,
    760,918, 783,936, 741,865, 660,803, 646,741, 668,782, 744,815, 713,833, 715,841, 663,722,
    668,729, 696,751, 625,703, 587,650, 580,656, 625,696, 646,720, 646,706, 651,715, 627,694,
    668,744, 717,782, 706,779, 698,748, 682,729, 687,727, 689,729, 675,754, 734,779, 741,782,
    734,784, 755,791, 767,798, 754,794, 786,843, 760,810, 744,784, 729,756, 720,754, 713,751,
    696,732, 687,727, 694,718, 691,725, 701,736, 694,718, 689,718, 694,722, 694,729, 689,718,
    684,736, 694,732, 682,720, 694,729, 694,732, 679,708, 687,729, 687,722, 677,710, 668,703,
    668,701, 675,706, 687,725, 708,732, 701,729, 708,739, 722,746, 727,754, 715,732, 708,727,
    708,725, 710,725, 725,739, 734,748, 737,760, 748,763, 748,765, 658,786, 741,777, 727,784,
    714,717, 715,911, 758,786, 741,770, 748,777, 748,770, 748,770, 793,858, 729,784, 741,756,
    746,770, 760,805, 767,789, 760,772, 710,770, 708,739, 715,744, 715,734, 694,718, 687,703,
    660,696, 651,687, 630,689, 662,706, 660,680, 663,680, 663,736, 706,758, 734,758, 734,767,
    715,782, 767,798, 729,813, 708,763, 722,756, 734,813, 779,850, 782,852, 754,805, 734,796,
    696,744, 687,722, 627,694, 622,670, 554,675, 549,622, 561,622, 563,687, 637,696, 630,675,
    660,734, 570,703, 592,687, 660,727, 649,710, 570,663, 565,630, 523,603, 513,601, 539,601,
    527,584, 527,582, 568,644, 587,656, 584,627, 603,642, 613,668, 634,658, 620,682, 601,644,
    622,708, 670,710, 675,710, 668,734, 691,739, 687,729, 672,701, 649,701, 634,682, 653,680,
    668,736, 729,755, 720,758, 713,741, 720,741, 720,753, 679,727, 675,696, 677,722, 710,741,
    660,718, 660,701, 665,703, 641,680, 651,677, 637,689, 641,698, 679,765, 739,763, 715,772,
    682,744, 682,720, 691,729, 698,732, 675,736, 637,691, 613,663, 625,663, 622,672, 599,637,
    573,630, 539,592, 520,570, 568,601, 561,601, 556,599, 535,575, 508,582, 544,582, 542,584,
    504,559, 489,535, 480,520, 487,544, 518,556, 499,554, 504,542, 530,558, 554,639, 511,584,
    473,546, 473,516, 470,530, 442,489, 418,470, 413,440
  ];
  var d = "", grid = "", i;

  for (i = 0; i < bars.length; i += 2) {
    d += "M" + (i + 0.5) + " " + bars[i] + "V" + bars[i + 1];
  }
  for (i = 1; i <= 22; i++) {
    grid += "M" + (i * 32 + 0.5) + " 24V1552";
  }
  for (i = 0; i < 20; i++) {
    grid += "M0 " + (44 + i * 78.9) + "H715";
  }

  document.getElementById("bars").setAttribute("d", d);
  document.getElementById("grid").setAttribute("d", grid);
})();
    </script>
</body>
</html>
```

FILE: styles.css
```css
html {
  box-sizing: border-box;
}

*,
*:before,
*:after {
  box-sizing: inherit;
}

body {
  margin: 0;
  background: #000;
  font-family: Roboto, "Open Sans", sans-serif;
  font-size: 12px;
  line-height: 16px;
  color: #000;
}

h1,
h2,
p,
ul {
  margin: 0;
  padding: 0;
  font-size: inherit;
  font-weight: normal;
  list-style: none;
}

a {
  color: inherit;
  text-decoration: none;
}

button,
input {
  margin: 0;
  padding: 0;
  border: 0;
  background: none;
  font: inherit;
  color: inherit;
}

table {
  border-collapse: separate;
  border-spacing: 0;
  table-layout: fixed;
}

th {
  font-weight: normal;
}

svg {
  display: block;
  flex: none;
}

.sprite {
  position: absolute;
  width: 0;
  height: 0;
}

/* desktop and windows */
.desktop {
  position: relative;
  height: 100vh;
  min-height: 920px;
  overflow: hidden;
  background: #000;
}

.window {
  position: absolute;
  display: flex;
  flex-direction: column;
}

.titlebar {
  position: relative;
  display: flex;
  flex: none;
  align-items: center;
  height: 29px;
}
.titlebar h1 {
  flex: 1;
  font-size: 15px;
  line-height: 20px;
  text-align: center;
  white-space: nowrap;
}

.caption-buttons {
  position: absolute;
  top: 0;
  right: -2px;
  display: flex;
  height: 22px;
  border: 1px solid #5b6670;
  border-top: 0;
}
.caption-buttons button {
  display: flex;
  align-items: center;
  justify-content: center;
  width: 27px;
  font-weight: bold;
  font-size: 15px;
}
.caption-buttons button + button {
  border-left: 1px solid #5b6670;
}
.caption-buttons .wide {
  width: 46px;
}
.caption-buttons .close {
  background: #c45b52;
}

.explorer {
  top: 0;
  right: 0;
  width: 80px;
  height: 852px;
  background: #fff;
  border-right: 4px solid #c3d5dc;
  border-bottom: 6px solid #c3d5dc;
}
.explorer-top {
  display: flex;
  justify-content: flex-end;
  align-items: center;
  gap: 10px;
  height: 15px;
  border-bottom: 1px solid #d8dce0;
}
.explorer-top svg {
  margin-bottom: 8px;
}
.help-dot {
  width: 16px;
  height: 16px;
  margin: -8px 3px 0 0;
  border-radius: 50%;
  background: #1f72c8;
  color: #fff;
  font-weight: bold;
  text-align: center;
}
.explorer-search {
  display: flex;
  align-items: center;
  justify-content: space-between;
  height: 23px;
  margin: 6px 11px 0 0;
  padding: 0 9px 0 5px;
  border: 1px solid #8a8a8a;
}
.explorer-search input {
  width: 30px;
  color: #777;
}

.index-window {
  top: 0;
  right: 72px;
  left: 1316px;
  height: 852px;
  border-right: 8px solid #c3d5dc;
  background: #000;
}
.index-chart {
  display: flex;
  height: 122px;
  margin-left: 1px;
}
.index-plot {
  flex: 1;
  width: 0;
  height: 122px;
}
.index-axis {
  flex: none;
  width: 53px;
  padding-top: 11px;
  border-left: 1px solid #fff;
  color: #fff;
  font-family: "DejaVu Sans Condensed", "Open Sans", sans-serif;
  font-size: 9px;
  line-height: 12px;
}
.index-axis li {
  display: flex;
  align-items: center;
  gap: 2px;
  margin-bottom: 20px;
}
.index-axis li:before {
  content: "";
  width: 3px;
  border-top: 1px solid #fff;
}

/* main window */
.main-window {
  top: 0;
  bottom: 0;
  left: 0;
  right: 787px;
  padding: 0 7px 7px;
  border: 1px solid #5f656e;
  background: #c3d5dc;
}
.app-logo {
  margin-left: 3px;
}

.client {
  display: flex;
  flex: 1;
  flex-direction: column;
  min-height: 0;
  background: #f0f0f0;
  border-top: 1px solid #a9b5ba;
}

.menubar {
  display: flex;
  flex: none;
  align-items: center;
  height: 21px;
  padding-left: 5px;
  border-bottom: 1px solid #a5a5a5;
  color: #979797;
}
.menubar nav {
  display: flex;
  flex: 1;
  gap: 18px;
  margin-left: 9px;
}
.mdi-buttons {
  display: flex;
}
.mdi-buttons button {
  display: flex;
  align-items: center;
  justify-content: center;
  width: 19px;
  height: 19px;
  border: 1px solid #b9bdc1;
}

.toolbar-row {
  display: flex;
  flex: none;
  height: 28px;
  padding-top: 1px;
  border-bottom: 1px solid #a5a5a5;
}
.toolbar-row + .toolbar-row {
  height: 27px;
  padding-top: 0;
}

.toolbar {
  display: flex;
  align-items: center;
  gap: 2px;
  padding: 0 1px 0 2px;
  border-right: 1px solid #a0a0a0;
}
.toolbar + .toolbar {
  padding-left: 4px;
}
.toolbar button {
  display: flex;
  align-items: center;
  justify-content: center;
  width: 26px;
  height: 24px;
  border: 1px solid transparent;
}
.toolbar .on {
  border-color: #a0a0a0 #fff #fff #a0a0a0;
  background: #f8f8f8;
}
.toolbar .drop {
  gap: 4px;
  width: 35px;
}
.toolbar .text {
  gap: 3px;
  white-space: nowrap;
}
.toolbar .order {
  width: 88px;
}
.toolbar .auto {
  width: 98px;
}
.toolbar .glyph {
  color: #444;
  font-weight: bold;
}
.grip {
  width: 4px;
  height: 20px;
  margin-right: 1px;
  background: repeating-linear-gradient(#a0a0a0 0 1px, #f0f0f0 1px 3px);
}
.sep {
  width: 1px;
  height: 22px;
  margin: 0 1px;
  background: #a0a0a0;
}
.toolbar.drawing .drop {
  width: 32px;
}
.periods button {
  color: #444;
  font-size: 11px;
}

.toolbar-end {
  display: flex;
  align-items: center;
  gap: 14px;
  margin-left: auto;
  padding-right: 8px;
}
.bell {
  position: relative;
  padding: 4px 5px 0 0;
}
.count {
  position: absolute;
  top: -1px;
  right: 0;
  width: 15px;
  height: 17px;
  border-radius: 8px;
  background: #e0301c;
  color: #fff;
  text-align: center;
}

.workspace {
  display: flex;
  flex: 1;
  min-height: 0;
}

/* docked panels */
.dock {
  display: flex;
  flex: none;
  flex-direction: column;
  gap: 2px;
  width: 532px;
  padding-bottom: 1px;
}

.panel {
  display: flex;
  flex-direction: column;
  padding: 0 2px 1px 3px;
  border-right: 1px solid #a5a5a5;
  border-bottom: 1px solid #a5a5a5;
}
.market {
  height: 333px;
}
.navigator {
  flex: 1;
  min-height: 0;
}

.panel-title {
  display: flex;
  flex: none;
  align-items: flex-start;
  height: 15px;
}
.panel-title h2 {
  flex: 1;
  height: 14px;
  padding-left: 2px;
  background: linear-gradient(to right, #bccbdc, #d4e3f2);
  line-height: 14px;
}
.panel-title.focus h2 {
  background: linear-gradient(to right, #99b4d1, #b9d1ea);
}
.panel-close {
  display: flex;
  align-items: center;
  justify-content: center;
  width: 13px;
  height: 13px;
}

.panel-body {
  display: flex;
  flex: 1;
  min-height: 0;
  overflow: hidden;
  border: 1px solid #a0a0a0;
  border-width: 1px 0 0 1px;
  background: #fff;
}

.quotes {
  flex: 1;
  align-self: flex-start;
}
.quotes th,
.quotes td {
  height: 20px;
  padding: 0 2px;
  border-right: 1px solid #c8c8c8;
  border-bottom: 1px solid #c8c8c8;
  text-align: right;
  line-height: 16px;
}
.quotes th {
  padding: 0 5px;
  border-color: #dcdcdc;
  background: #fcfcfc;
}
.quotes tr > :first-child {
  width: 217px;
  text-align: left;
}
.quotes tr > :last-child {
  border-right-color: transparent;
}
.quotes td:first-child {
  padding-left: 4px;
}
.quotes td svg {
  display: inline-block;
  width: 12px;
  height: 12px;
  margin-right: 4px;
  vertical-align: -3px;
}
.quotes tbody tr {
  background: #ffe8ce;
}
.quotes tbody .hot {
  background: #ffc600;
}
.quotes .rise td + td {
  color: #1a10e0;
}
.quotes .fall td + td {
  color: #f11;
}
.quotes tbody .selected {
  background: #3399ff;
  color: #fff;
}

.scrollbar {
  display: flex;
  flex: none;
  flex-direction: column;
  width: 17px;
  background: #fff;
  border-left: 1px solid #c8c8c8;
  border-right: 1px solid #c8c8c8;
}
.scrollbar button {
  display: flex;
  align-items: center;
  justify-content: center;
  height: 17px;
  border: 1px solid #c0c0c0;
  border-width: 1px 0;
}
.track {
  flex: 1;
}
.thumb {
  height: 95px;
  border: 1px solid #a0a0a0;
  border-width: 1px 0;
  background: repeating-linear-gradient(#666 0 2px, transparent 2px 3px) center / 7px 8px no-repeat #dcdcdc;
}
.navigator .thumb {
  height: 74px;
  margin-top: 153px;
}

.tree {
  flex: 1;
  min-width: 0;
  padding-top: 1px;
  background: repeating-linear-gradient(#888 0 1px, transparent 1px 2px) 13px 0 / 1px 100% no-repeat;
}
.tree li {
  display: flex;
  align-items: center;
  gap: 6px;
  height: 18px;
  padding-left: 34px;
  white-space: nowrap;
  background: repeating-linear-gradient(#888 0 1px, transparent 1px 2px) 34px 0 / 1px 100% no-repeat;
}
.tree li:before {
  content: "";
  flex: none;
  width: 9px;
  margin-right: -2px;
  border-top: 1px dotted #888;
}
.tree li svg {
  width: 16px;
  height: 16px;
}
.tree .last {
  background-size: 1px 9px;
}
.tree .branch {
  padding-left: 13px;
  background: none;
}
.tree b {
  flex: none;
  width: 9px;
  height: 9px;
  margin: 0 2px 0 -17px;
  border: 1px solid #999;
  background: #fff;
  font-weight: normal;
  font-size: 9px;
  line-height: 7px;
  text-align: center;
}

.tabs {
  display: flex;
  flex: none;
  align-items: flex-start;
  height: 24px;
  padding-left: 3px;
  border-top: 1px solid #000;
  color: #7a7a7a;
}
.tabs a {
  position: relative;
  height: 19px;
  padding: 1px 10px;
  white-space: nowrap;
}
.tabs a:not(.active):after {
  content: "";
  position: absolute;
  top: 4px;
  right: 0;
  height: 14px;
  border-right: 1px solid #666;
}
.tabs .active {
  height: 20px;
  margin-top: -1px;
  border: 1px solid #000;
  border-top-color: #fff;
  background: #fff;
  color: #000;
}
.tabs sub {
  margin-left: 2px;
  color: #f02020;
  font-weight: bold;
  font-size: 10px;
  line-height: 8px;
}

/* chart */
.chart-pane {
  display: flex;
  flex: 1;
  flex-direction: column;
  min-width: 0;
  padding: 0 1px 0 2px;
}
.chart {
  display: grid;
  flex: 1;
  grid-template-columns: minmax(0, 1fr) 46px;
  grid-template-rows: minmax(0, 1fr) 20px;
  min-height: 0;
  padding: 2px 0 0 2px;
  border-left: 1px solid #7a7a7a;
  background: #000;
  color: #fff;
  font-family: "DejaVu Sans Condensed", "Open Sans", sans-serif;
  font-size: 9px;
  line-height: 12px;
}
.plot {
  position: relative;
  border: 1px solid #fff;
}
.plot > svg {
  width: 100%;
  height: 100%;
  shape-rendering: crispEdges;
}
.plot path {
  vector-effect: non-scaling-stroke;
}
.grid {
  fill: none;
  stroke: #778899;
  stroke-dasharray: 3 3;
}
.bid-line {
  stroke: #778899;
}
.bars {
  fill: none;
  stroke: #0f0;
}
.plot-text {
  position: absolute;
  top: 2px;
  left: 4px;
  white-space: nowrap;
}
.quote-line {
  display: flex;
  align-items: center;
  gap: 5px;
  margin-bottom: 13px;
}

.price-axis {
  display: flex;
  flex-direction: column;
  justify-content: space-between;
  margin-bottom: -2px;
  padding-top: 4px;
}
.price-axis li {
  display: flex;
  align-items: center;
  gap: 3px;
}
.price-axis li:before {
  content: "";
  width: 2px;
  border-top: 1px solid #fff;
}
.price-axis .bid {
  width: 41px;
  margin-top: -2px;
  background: #fff;
  color: #000;
}

.time-axis {
  display: flex;
  grid-column: 1 / 3;
  padding-top: 4px;
  white-space: nowrap;
}
.time-axis li {
  flex: none;
  width: 64px;
}

.chart-tabs {
  height: 21px;
  margin-top: 2px;
}
.tab-arrows {
  margin: 7px 6px 0 auto;
}

/* terminal */
.terminal {
  display: flex;
  flex: none;
  height: 135px;
  padding: 3px 1px 4px 0;
  border-top: 1px solid #fff;
  border-bottom: 1px solid #a5a5a5;
}
.terminal-side {
  display: flex;
  flex-direction: column;
  width: 16px;
  padding-left: 1px;
}
.terminal-side h2 {
  flex: 1;
  width: 13px;
  padding-top: 2px;
  background: linear-gradient(#bccbdc, #d4e3f2);
  line-height: 13px;
  writing-mode: vertical-rl;
  transform: rotate(180deg);
}
.terminal-main {
  display: flex;
  flex: 1;
  flex-direction: column;
  min-width: 0;
}
.terminal-body {
  flex: 1;
  border: 1px solid #8a8a8a;
  border-width: 1px 0 0 1px;
  background: #fff;
}
.orders {
  width: 100%;
}
.orders th {
  width: 97px;
  height: 20px;
  padding: 0 5px;
  border-right: 1px solid #dcdcdc;
  border-bottom: 1px solid #dcdcdc;
  background: #fcfcfc;
  text-align: right;
}
.orders th:nth-child(1) {
  width: 126px;
  text-align: left;
}
.orders th:nth-child(2) {
  width: 176px;
}
.orders th:nth-child(3),
.orders th:nth-child(5) {
  width: 88px;
}
.orders th:nth-child(4) {
  width: 68px;
}
.orders th:last-child {
  width: auto;
  padding-right: 10px;
  border-right: 0;
}
.sort {
  margin-left: 8px;
  color: #888;
}
.orders td {
  height: 20px;
  padding: 0 8px;
  background: #c8c8c8;
  font-weight: bold;
}
.orders td svg {
  display: inline-block;
  margin-right: 7px;
  vertical-align: -1px;
}
.orders td:last-child {
  text-align: right;
}
.terminal .tabs {
  height: 21px;
  padding-left: 2px;
}

.statusbar {
  display: flex;
  flex: none;
  align-items: center;
  height: 23px;
  padding-left: 2px;
}
.statusbar span {
  flex: none;
  width: 70px;
  height: 20px;
  padding: 3px 5px 1px;
  border-left: 1px solid #a0a0a0;
  white-space: nowrap;
}
.statusbar .hint {
  flex: 1;
  padding-left: 0;
  border-left: 0;
}
.statusbar .profile {
  width: 116px;
}
.statusbar .date {
  width: 102px;
}
.statusbar .volume {
  width: 66px;
}
.statusbar .traffic {
  display: flex;
  align-items: center;
  gap: 5px;
  width: 136px;
}
.statusbar .size-grip {
  align-self: flex-end;
}

/* expert dialog */
.dialog {
  top: 121px;
  right: 8px;
  left: 1303px;
  height: 787px;
  padding: 0 7px 7px;
  border: 1px solid #1f3a44;
  background: #66c9ea;
  font-family: "Liberation Sans", Arial, sans-serif;
  font-size: 11px;
}
.dialog .titlebar {
  font-family: Roboto, "Open Sans", sans-serif;
}
.dialog .caption-buttons {
  border-color: #1f3a44;
}
.dialog-body {
  display: flex;
  flex: 1;
  flex-direction: column;
  min-height: 0;
  padding: 7px 4px 0 6px;
  border: 1px solid #5aa9c6;
  border-width: 1px 0 0;
  background: #f0f0f0;
}
.dialog-tabs {
  display: flex;
  flex: none;
  align-items: flex-end;
  height: 21px;
  padding-left: 2px;
}
.dialog-tabs button {
  height: 19px;
  padding: 0 4px 0 5px;
  border: 1px solid #8b8b93;
  border-width: 1px 0 0 1px;
}
.dialog-tabs .active {
  z-index: 1;
  height: 22px;
  margin-bottom: -1px;
  padding: 0 7px 4px 6px;
  border-right-width: 1px;
  background: #fff;
}
.dialog-page {
  display: flex;
  flex: 1;
  align-items: stretch;
  gap: 8px;
  min-height: 0;
  padding: 9px 11px 10px;
  border: 1px solid #8b8b93;
  background: #fff;
}
.inputs-frame {
  display: flex;
  flex: 1;
  min-width: 0;
  overflow: hidden;
  padding: 1px;
  border: 1px solid #828790;
}
.inputs {
  flex: 1;
  align-self: flex-start;
}
.inputs th {
  width: 50%;
  height: 17px;
  padding: 0 6px;
  border-right: 1px solid #dcdcdc;
  border-bottom: 1px solid #dcdcdc;
  background: #fcfcfc;
  text-align: left;
}
.inputs td {
  height: 20px;
  padding: 0 3px;
  border-right: 1px solid #c8c8c8;
  border-bottom: 1px solid #c8c8c8;
}
.inputs td:first-child {
  padding-left: 1px;
}
.inputs tr > :last-child {
  border-right: 0;
}
.inputs td svg {
  display: inline-block;
  width: 16px;
  height: 17px;
  margin-right: 4px;
  vertical-align: -5px;
}
.inputs tbody tr:nth-child(odd) {
  background: #eaeaea;
}
.dialog .thumb {
  height: 387px;
  margin-top: 181px;
}
.btn {
  width: 73px;
  height: 21px;
  border: 1px solid #707070;
  background: #dddddd;
}
.side-buttons {
  display: flex;
  flex: none;
  flex-direction: column;
  justify-content: flex-end;
  gap: 12px;
}
.side-buttons .btn {
  width: 103px;
}
.default {
  border-color: #3c7fb1;
}
.dialog-footer {
  display: flex;
  flex: none;
  align-items: flex-start;
  justify-content: flex-end;
  gap: 8px;
  height: 35px;
  padding-top: 5px;
}
.dialog-footer .size-grip {
  align-self: flex-end;
  margin: 0 -1px 2px -9px;
}
```
